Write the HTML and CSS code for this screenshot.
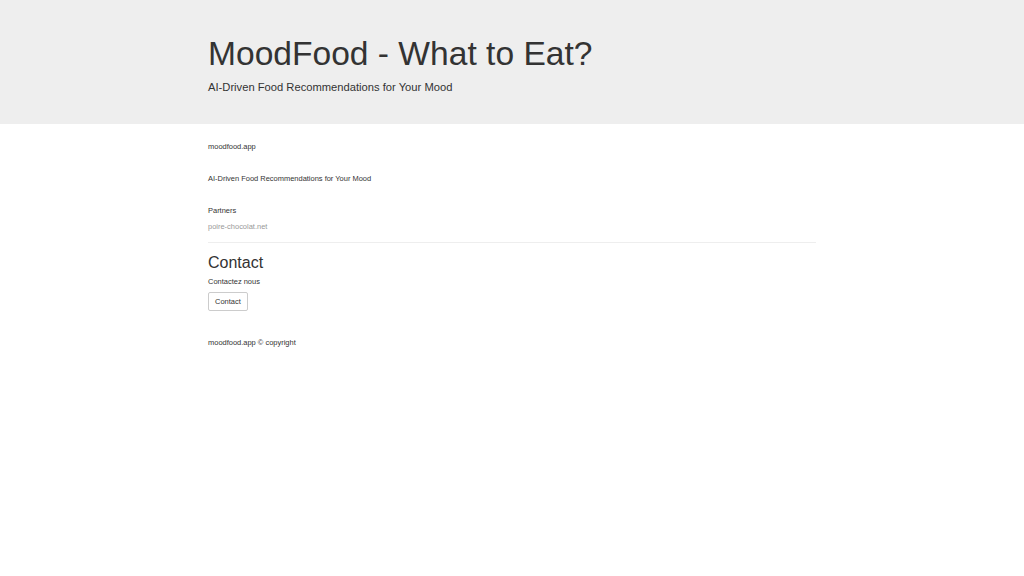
FILE: index.html
```html
<!DOCTYPE html>
<html lang="en">
<head>
<meta charset="utf-8">
<title>MoodFood - What to Eat?</title>
<link rel="stylesheet" href="styles.css">
</head>
<body>
<header class="jumbotron">
  <div class="container">
    <h1 class="title">MoodFood - What to Eat?</h1>
    <p class="lead">AI-Driven Food Recommendations for Your Mood</p>
  </div>
</header>
<main class="container content">
  <p class="item">moodfood.app</p>
  <p class="item">AI-Driven Food Recommendations for Your Mood</p>
  <p class="item item-label">Partners</p>
  <a class="partner" href="#">poire-chocolat.net</a>
  <hr class="divider">
  <h2 class="section-title">Contact</h2>
  <p class="contact-text">Contactez nous</p>
  <button class="btn" type="button">Contact</button>
  <footer class="footer">moodfood.app © copyright</footer>
</main>
</body>
</html>
```

FILE: styles.css
```css
html, body {
  margin: 0;
  padding: 0;
  background: #fff;
}

body {
  font-family: "Liberation Sans", Arial, Helvetica, sans-serif;
  font-size: 7.47px;
  line-height: 10.67px;
  color: #333;
}

.container {
  width: 608px;
  margin: 0 auto;
}

.jumbotron {
  background: #eeeeee;
  padding: 25px 0 21.5px;
}

.title {
  margin: 10.67px 0 6.33px;
  font-size: 33.6px;
  line-height: 1.1;
  font-weight: 500;
  color: #333;
}

.lead {
  margin: 0 0 8px;
  font-size: 11.2px;
  line-height: 16px;
  font-weight: 300;
}

.content {
  display: flex;
  flex-direction: column;
  align-items: flex-start;
  padding-top: 18px;
}

.item {
  margin: 0 0 21.33px;
}

.item-label {
  margin-bottom: 5.33px;
}

.partner {
  color: #999;
  text-decoration: none;
}

.divider {
  align-self: stretch;
  margin: 9px 0 11px;
  border: 0;
  border-top: 1px solid #eee;
  height: 0;
}

.section-title {
  margin: 0 0 5.2px;
  font-size: 16px;
  line-height: 1.1;
  font-weight: 500;
}

.contact-text {
  margin: 0 0 4px;
}

.btn {
  font-family: inherit;
  font-size: 7.47px;
  line-height: 10.67px;
  color: #333;
  background: #fff;
  border: 1px solid #ccc;
  border-radius: 2px;
  padding: 4px 6px 3px;
  margin: 0;
  cursor: pointer;
}

.footer {
  margin-top: 27px;
}
```
